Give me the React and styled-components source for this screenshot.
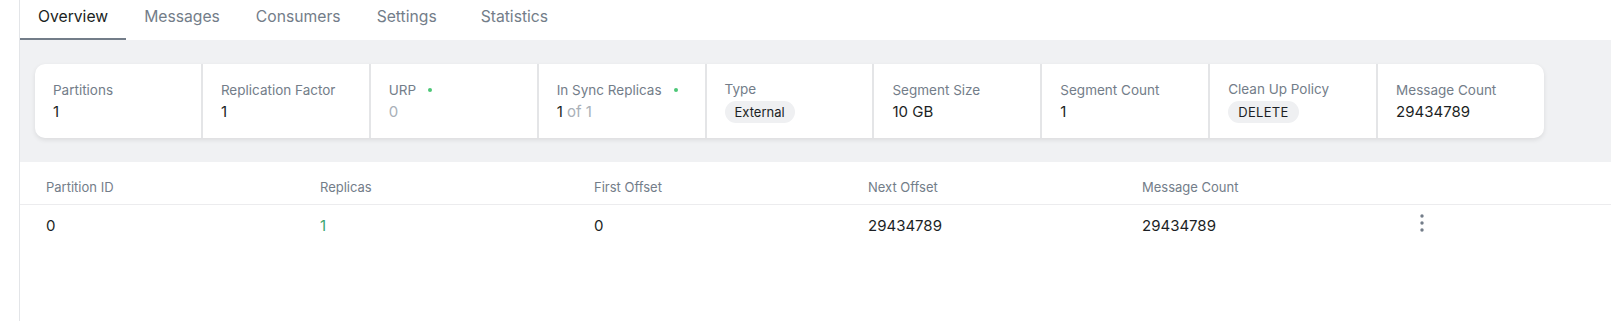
import React from "react";
import styled, { createGlobalStyle } from "styled-components";

const GlobalStyle = createGlobalStyle`
  html, body { margin: 0; padding: 0; background: #ffffff; }
  body { font-family: Inter, "Noto Sans", "Liberation Sans", sans-serif; color: #1c1f24; }
  * { box-sizing: border-box; }
`;

const Page = styled.div`
  display: flex;
  min-height: 100vh;
`;

const Gutter = styled.div`
  width: 20px;
  flex: none;
  border-right: 1px solid #e3e5e8;
`;

const Main = styled.div`
  flex: 1;
  display: flex;
  flex-direction: column;
  min-width: 0;
`;

const TabBar = styled.nav`
  display: flex;
  height: 40px;
  background: #ffffff;
`;

const Tab = styled.div`
  height: 40px;
  min-width: 104px;
  padding: 7px 18px 0;
  font-size: 15.7px;
  line-height: 20px;
  color: ${(p) => (p.$active ? "#1c1f24" : "#737d89")};
  border-bottom: 2px solid ${(p) => (p.$active ? "#737d89" : "transparent")};
  cursor: pointer;
`;

const Band = styled.section`
  background: #f0f1f3;
  padding: 24px 15px;
`;

const StatCard = styled.div`
  width: 1509px;
  display: grid;
  grid-template-columns: repeat(9, 1fr);
  gap: 2px;
  background: #e4e5e7;
  border-radius: 10px;
  overflow: hidden;
  box-shadow: 0 2px 5px rgba(0, 0, 0, 0.09);
`;

const Cell = styled.div`
  background: #ffffff;
  height: 74px;
  padding: 0 18px;
  display: flex;
  flex-direction: column;
  justify-content: center;
  gap: 2px;
`;

const Label = styled.div`
  display: flex;
  align-items: center;
  gap: 12px;
  font-size: 13.5px;
  line-height: 20px;
  color: #737d89;
  white-space: nowrap;
`;

const Dot = styled.span`
  width: 4px;
  height: 4px;
  border-radius: 50%;
  background: #4cc777;
`;

const Value = styled.div`
  font-size: 15px;
  line-height: 20px;
  color: ${(p) => (p.$muted ? "#a9b0b8" : "#1c1f24")};
`;

const Muted = styled.span`
  color: #a9b0b8;
`;

const Badge = styled.span`
  align-self: flex-start;
  height: 22px;
  padding: 0 10px;
  border-radius: 11px;
  background: #eff0f2;
  font-size: 13px;
  line-height: 22px;
  color: #1c1f24;
  letter-spacing: ${(p) => (p.$caps ? "0.3px" : "0")};
`;

const TableWrap = styled.div`
  padding-top: 8px;
`;

const Table = styled.table`
  width: 100%;
  border-collapse: collapse;
  table-layout: fixed;
`;

const Th = styled.th`
  width: 274px;
  padding: 7px 26px;
  text-align: left;
  font-weight: 400;
  font-size: 13px;
  line-height: 20px;
  color: #737d89;
  border-bottom: 1px solid #ececee;
`;

const FillTh = styled(Th)`
  width: auto;
`;

const Td = styled.td`
  padding: 11px 26px;
  font-size: 15px;
  line-height: 20px;
  color: ${(p) => (p.$accent ? "#3ba56f" : "#1c1f24")};
  vertical-align: top;
`;

const KebabIcon = styled.svg`
  display: block;
  margin: -2px 0 0 4px;
`;

const Kebab = () => (
  <KebabIcon width="4" height="18" viewBox="0 0 4 18" aria-label="More actions">
    <circle cx="2" cy="2" r="1.7" fill="#737d89" />
    <circle cx="2" cy="9" r="1.7" fill="#737d89" />
    <circle cx="2" cy="16" r="1.7" fill="#737d89" />
  </KebabIcon>
);

const tabs = ["Overview", "Messages", "Consumers", "Settings", "Statistics"];

const stats = [
  { label: "Partitions", value: "1" },
  { label: "Replication Factor", value: "1" },
  { label: "URP", dot: true, value: "0", muted: true },
  { label: "In Sync Replicas", dot: true, value: "1", suffix: " of 1" },
  { label: "Type", badge: "External" },
  { label: "Segment Size", value: "10 GB" },
  { label: "Segment Count", value: "1" },
  { label: "Clean Up Policy", badge: "DELETE", caps: true },
  { label: "Message Count", value: "29434789" },
];

const columns = ["Partition ID", "Replicas", "First Offset", "Next Offset", "Message Count"];

export default function App() {
  return (
    <>
      <GlobalStyle />
      <Page>
        <Gutter />
        <Main>
          <TabBar>
            {tabs.map((t, i) => (
              <Tab key={t} $active={i === 0}>
                {t}
              </Tab>
            ))}
          </TabBar>
          <Band>
            <StatCard>
              {stats.map((s) => (
                <Cell key={s.label}>
                  <Label>
                    {s.label}
                    {s.dot && <Dot />}
                  </Label>
                  {s.badge ? (
                    <Badge $caps={s.caps}>{s.badge}</Badge>
                  ) : (
                    <Value $muted={s.muted}>
                      {s.value}
                      {s.suffix && <Muted>{s.suffix}</Muted>}
                    </Value>
                  )}
                </Cell>
              ))}
            </StatCard>
          </Band>
          <TableWrap>
            <Table>
              <thead>
                <tr>
                  {columns.map((c) => (
                    <Th key={c}>{c}</Th>
                  ))}
                  <FillTh />
                </tr>
              </thead>
              <tbody>
                <tr>
                  <Td>0</Td>
                  <Td $accent>1</Td>
                  <Td>0</Td>
                  <Td>29434789</Td>
                  <Td>29434789</Td>
                  <Td>
                    <Kebab />
                  </Td>
                </tr>
              </tbody>
            </Table>
          </TableWrap>
        </Main>
      </Page>
    </>
  );
}
